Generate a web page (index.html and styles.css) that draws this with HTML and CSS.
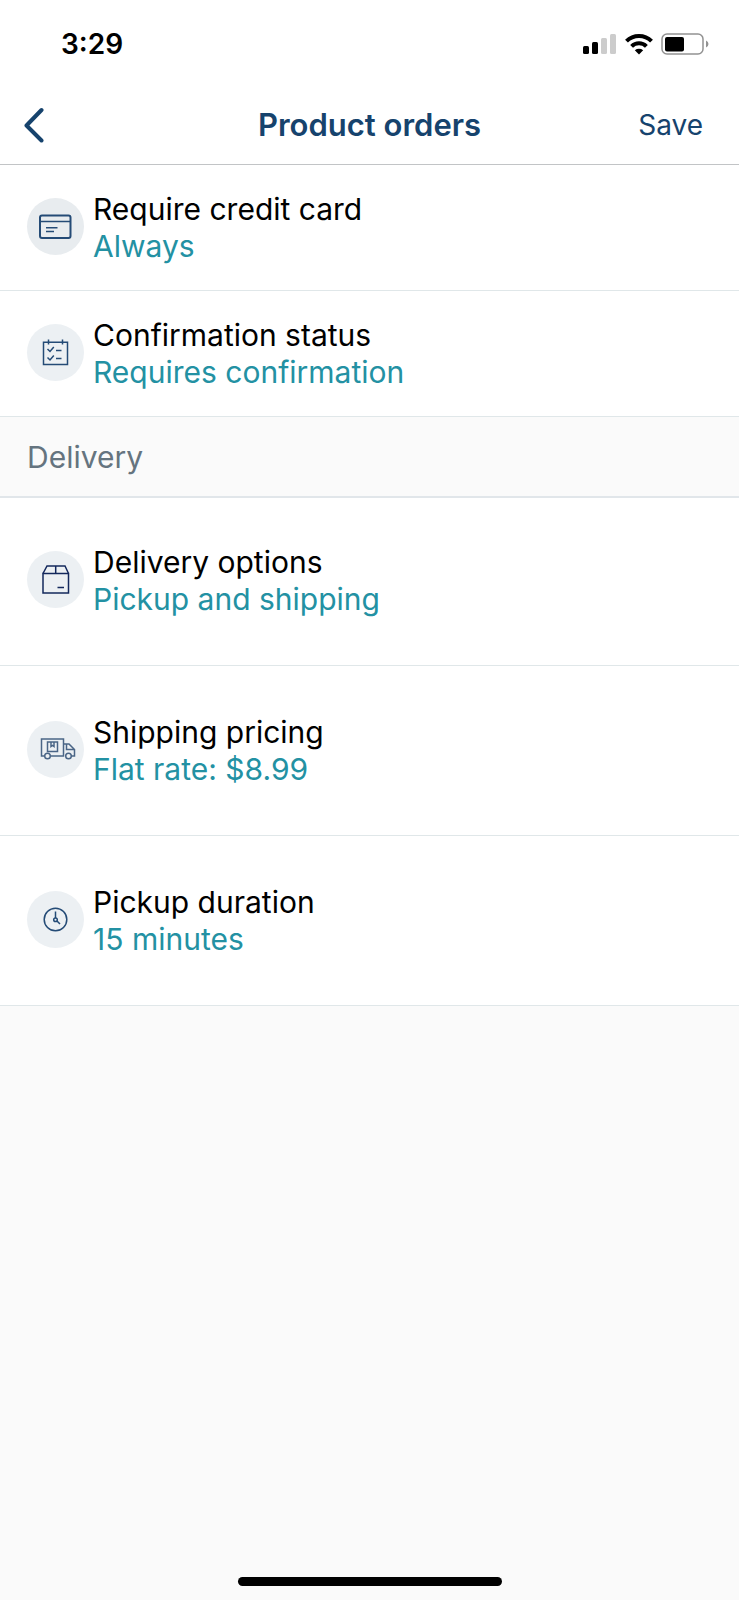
FILE: index.html
```html
<!DOCTYPE html>
<html lang="en">
<head>
    <meta charset="UTF-8">
    <meta name="viewport" content="width=device-width, initial-scale=1.0">
    <title>Product orders</title>
    <link rel="stylesheet" href="styles.css">
</head>
<body>
    <div class="status-bar">
        <span class="time">3:29</span>
        <div class="status-icons">
            <!-- signal -->
            <svg width="34" height="22" viewBox="0 0 34 22">
                <rect x="0" y="13" width="6" height="8" rx="1.5"/>
                <rect x="9" y="9" width="6" height="12" rx="1.5"/>
                <rect x="18" y="5" width="6" height="16" rx="1.5" fill="#cccccc"/>
                <rect x="27" y="1" width="6" height="20" rx="1.5" fill="#cccccc"/>
            </svg>
            <!-- wifi -->
            <svg width="28" height="22" viewBox="0 0 28 22" fill="none" stroke="#000" stroke-width="4">
                <path d="M1.5 8.2 A17.5 17.5 0 0 1 26.5 8.2"/>
                <path d="M6.6 13.3 A10.5 10.5 0 0 1 21.4 13.3"/>
                <path d="M9.8 17.2 Q14 14.4 18.2 17.2 L14 21.5 Z" fill="#000" stroke="none"/>
            </svg>
            <!-- battery -->
            <svg width="48" height="22" viewBox="0 0 48 22">
                <rect x="1" y="1" width="41" height="20" rx="5" fill="none" stroke="#929292" stroke-width="1.5"/>
                <rect x="4" y="4" width="19" height="14.5" rx="2"/>
                <path d="M45 7.5 Q47.5 8.5 47.5 11 Q47.5 13.5 45 14.5 Z" fill="#929292"/>
            </svg>
        </div>
    </div>

    <header class="nav-bar">
        <button class="btn-back" type="button" aria-label="Back">
            <svg width="22" height="36" viewBox="0 0 22 36" fill="none" stroke="currentColor" stroke-width="4" stroke-linecap="round" stroke-linejoin="round">
                <path d="M18.5 3 L3.5 18.5 L18.5 33.5"/>
            </svg>
        </button>
        <h1>Product orders</h1>
        <button class="btn-save" type="button">Save</button>
    </header>

    <main>
        <div class="list">
            <a class="row" href="#">
                <span class="icon icon-card">
                    <svg width="57" height="57" viewBox="0 0 57 57">
                        <rect x="13" y="17.5" width="30.5" height="22.5" rx="2" stroke-width="2"/>
                        <path d="M13 23.5 H43.5 M19 29.7 H30.5 M19 33.5 H27"/>
                    </svg>
                </span>
                <span class="text">
                    <span class="label">Require credit card</span>
                    <span class="value">Always</span>
                </span>
            </a>
            <a class="row" href="#">
                <span class="icon">
                    <svg width="57" height="57" viewBox="0 0 57 57">
                        <path d="M16.5 18.2 H40.5 V40.5 H16.5 Z M21.5 15.5 V20.5 M35.5 15.5 V20.5"/>
                        <path d="M20.5 25 L23 27.5 L26.8 23 M20.5 33.5 L23 36 L26.8 31.5 M29 26.5 H34.5 M29 34.5 H34.5"/>
                    </svg>
                </span>
                <span class="text">
                    <span class="label">Confirmation status</span>
                    <span class="value">Requires confirmation</span>
                </span>
            </a>
        </div>

        <h2 class="section-title">Delivery</h2>

        <div class="list list-tall">
            <a class="row" href="#">
                <span class="icon icon-box">
                    <svg width="57" height="57" viewBox="0 0 57 57">
                        <path d="M16 22.5 H41.5 V42 H16 Z"/>
                        <path d="M16 22.5 L20 15 H38 L41.5 22.5 M28.7 15 V22.5 M30.5 36.5 H37"/>
                    </svg>
                </span>
                <span class="text">
                    <span class="label">Delivery options</span>
                    <span class="value">Pickup and shipping</span>
                </span>
            </a>
            <a class="row" href="#">
                <span class="icon icon-truck">
                    <svg width="57" height="57" viewBox="0 0 57 57">
                        <path d="M17.5 35 H14.5 V18 H36.5 V35 H24 M36.5 23 H42 L47.5 28.5 V35 H44.5 M39.5 23 V28.5 H47.5"/>
                        <rect x="20.5" y="21" width="10" height="9.5"/>
                        <path d="M24 21 V25.5 L25.5 24.5 L27 25.5 V21"/>
                        <circle cx="20.5" cy="35" r="2.8"/>
                        <circle cx="41.5" cy="35" r="2.8"/>
                    </svg>
                </span>
                <span class="text">
                    <span class="label">Shipping pricing</span>
                    <span class="value">Flat rate: $8.99</span>
                </span>
            </a>
            <a class="row" href="#">
                <span class="icon">
                    <svg width="57" height="57" viewBox="0 0 57 57">
                        <circle cx="28.5" cy="28.5" r="11.3"/>
                        <path d="M28.5 20.5 V27 M30 30 L33 33"/>
                        <circle cx="28.5" cy="28.7" r="1.8"/>
                    </svg>
                </span>
                <span class="text">
                    <span class="label">Pickup duration</span>
                    <span class="value">15 minutes</span>
                </span>
            </a>
        </div>
    </main>

    <div class="home-indicator"></div>
</body>
</html>
```
FILE: styles.css
```css
/* Base */
* {
    box-sizing: border-box;
}

body {
    margin: 0;
    min-height: 100vh;
    display: flex;
    flex-direction: column;
    font-family: Inter, "Liberation Sans", sans-serif;
    font-size: 30px;
    line-height: 38px;
    color: #000000;
    background-color: #fafafa;
}

svg {
    display: block;
}

/* Status bar */
.status-bar {
    display: flex;
    justify-content: space-between;
    align-items: center;
    height: 88px;
    padding: 0 30px 0 61px;
    background-color: #ffffff;
}

.time {
    font-size: 28px;
    font-weight: 600;
}

.status-icons {
    display: flex;
    gap: 8px;
}

/* Navigation bar */
.nav-bar {
    display: grid;
    grid-template-columns: 1fr auto 1fr;
    align-items: center;
    height: 77px;
    padding: 0 23px 2px;
    color: #16436d;
    background-color: #ffffff;
    border-bottom: 1px solid #c2c4c6;
}

.nav-bar h1 {
    margin: 0;
    font-size: 31px;
    font-weight: 600;
}

.nav-bar button {
    border: none;
    background: none;
    font: inherit;
    color: inherit;
    cursor: pointer;
}

.nav-bar .btn-back {
    justify-self: start;
    padding: 0;
}

.nav-bar .btn-save {
    justify-self: end;
    padding: 0 13px 0 0;
    font-size: 28px;
}

/* Setting rows */
.list {
    background-color: #ffffff;
}

.row {
    display: flex;
    align-items: center;
    gap: 9px;
    padding: 25px 27px;
    border-bottom: 1px solid #e0e7e9;
    color: inherit;
    text-decoration: none;
}

.list-tall .row {
    padding: 47px 27px;
}

.list-tall .row:first-child {
    box-shadow: inset 0 2px #e1e6ea;
}

.text {
    display: flex;
    flex-direction: column;
}

.value {
    line-height: 37px;
    color: #2391a3;
}

/* Round icons */
.icon {
    width: 57px;
    height: 57px;
    margin-bottom: 2px;
    border-radius: 50%;
    background-color: #ecf0f3;
}

.icon svg {
    fill: none;
    stroke: #244b76;
    stroke-width: 1.5;
}

.icon-card {
    background-color: #e8ecef;
}

.icon-box svg {
    stroke: #13285c;
}

.icon-truck svg {
    stroke: #4a6586;
}

/* Section heading */
.section-title {
    margin: 0;
    padding: 21px 27px 20px;
    font-size: 30px;
    font-weight: 400;
    color: #65747f;
}

/* Home indicator */
.home-indicator {
    width: 264px;
    height: 9px;
    margin: auto auto 14px;
    border-radius: 5px;
    background-color: #000000;
}
```
